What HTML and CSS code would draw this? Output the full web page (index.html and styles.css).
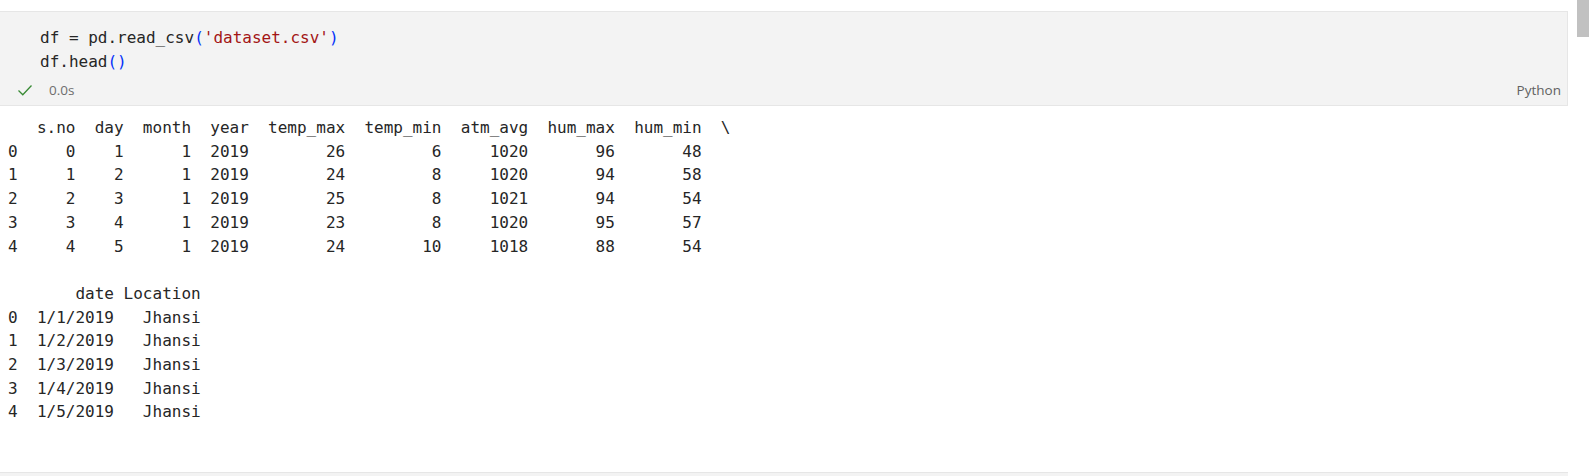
FILE: index.html
```html
<!DOCTYPE html>
<html>
<head>
<meta charset="utf-8">
<link rel="stylesheet" href="styles.css">
</head>
<body>
<div class="scrollbar"></div>
<div class="cell">
  <pre class="code">df = pd.read_csv<span class="br">(</span><span class="str">'dataset.csv'</span><span class="br">)</span>
df.head<span class="br">()</span></pre>
  <div class="status">
    <div class="left">
      <svg class="check" width="16" height="16" viewBox="0 0 16 16"><path d="M1.5 8.5 L5.8 12.8 L14.5 3.5" fill="none" stroke="#388a34" stroke-width="1.3"/></svg>
      <span class="time">0.0s</span>
    </div>
    <span class="lang">Python</span>
  </div>
</div>
<pre class="output">   s.no  day  month  year  temp_max  temp_min  atm_avg  hum_max  hum_min  \
0     0    1      1  2019        26         6     1020       96       48   
1     1    2      1  2019        24         8     1020       94       58   
2     2    3      1  2019        25         8     1021       94       54   
3     3    4      1  2019        23         8     1020       95       57   
4     4    5      1  2019        24        10     1018       88       54   

       date Location  
0  1/1/2019   Jhansi  
1  1/2/2019   Jhansi  
2  1/3/2019   Jhansi  
3  1/4/2019   Jhansi  
4  1/5/2019   Jhansi  </pre>
<div class="next-cell"></div>
</body>
</html>
```
FILE: styles.css
```css
html, body {
  margin: 0;
  padding: 0;
  background: #ffffff;
  overflow: hidden;
}
body {
  width: 1589px;
  height: 476px;
  position: relative;
}
.scrollbar {
  position: absolute;
  top: 0;
  right: 0;
  width: 12px;
  height: 37px;
  background: #c1c1c1;
}
.cell {
  margin-top: 11px;
  width: 1567px;
  height: 93px;
  background: #f3f3f3;
  border-top: 1px solid #e6e6e6;
  border-right: 1px solid #e6e6e6;
  border-bottom: 1px solid #e6e6e6;
  box-sizing: content-box;
  display: flex;
  flex-direction: column;
}
.code {
  margin: 0;
  padding: 14px 0 0 40px;
  font-family: "DejaVu Sans Mono", monospace;
  font-size: 16px;
  line-height: 24px;
  color: #262626;
}
.br { color: #0431fa; }
.str { color: #a31515; }
.status {
  margin-top: auto;
  height: 30px;
  display: flex;
  align-items: center;
  justify-content: space-between;
  padding: 0 6px 0 17px;
  font-family: "Open Sans", "Noto Sans", sans-serif;
  font-size: 13.5px;
}
.left {
  display: flex;
  align-items: center;
  gap: 16px;
}
.check { display: block; }
.time { color: #6e6e6e; }
.lang { color: #616161; }
.output {
  margin: 0;
  padding: 10px 0 0 8px;
  height: 366px;
  box-sizing: border-box;
  font-family: "DejaVu Sans Mono", monospace;
  font-size: 16px;
  line-height: 23.7px;
  color: #262626;
}
.next-cell {
  width: 1568px;
  height: 10px;
  background: #f3f3f3;
  border-top: 1px solid #e6e6e6;
}
```
